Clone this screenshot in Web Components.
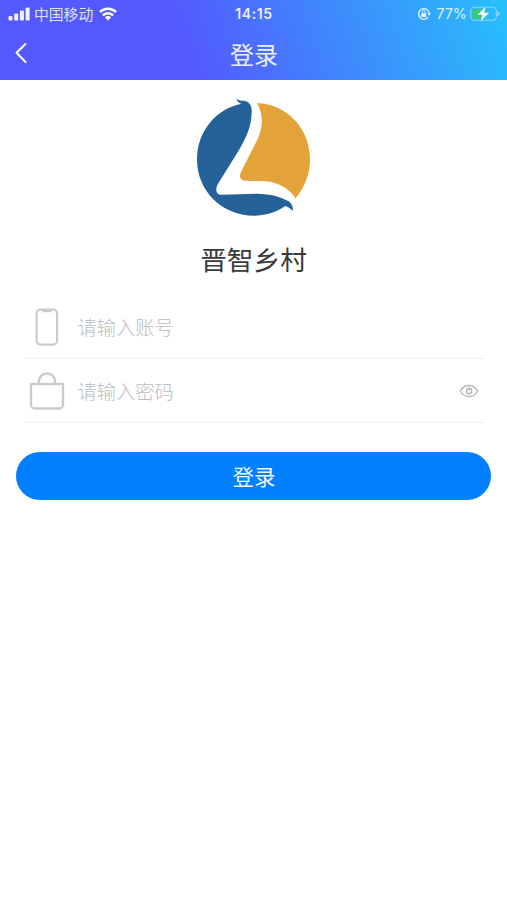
<!DOCTYPE html>
<html lang="zh-CN">
<head>
<meta charset="utf-8">
<title>登录</title>
<style>
html,body{margin:0;height:100%;background:#fff}
body{font-family:"Noto Sans CJK SC","Noto Sans",sans-serif}
</style>
</head>
<body>
<login-page></login-page>
<script>
function define(name, html) {
  const t = document.createElement('template');
  t.innerHTML = html;
  customElements.define(name, class extends HTMLElement {
    constructor() {
      super();
      this.attachShadow({mode: 'open'}).appendChild(t.content.cloneNode(true));
    }
  });
}

define('status-bar', `
<style>
:host{display:grid;grid-template-columns:1fr auto 1fr;align-items:center;height:27px;padding:0 7px 0 8px;color:#dfe2ff;font-size:14.8px;line-height:27px;box-sizing:border-box}
div{display:flex;align-items:center;height:27px}
.end{justify-content:flex-end}
svg{display:block;flex:none}
.carrier{margin:-1px 6px 0 4px}
.time{font:600 14px/27px Inter,sans-serif;letter-spacing:.6px;color:#e8efff}
.pct{font:400 14px/27px Inter,sans-serif;letter-spacing:.2px;margin:0 3px 0 6px;color:#dff2ff}
</style>
<div>
<svg width="22" height="14" viewBox="0 0 22 14" fill="#f2f4ff"><rect x=".5" y="9" width="4" height="4.5" rx="1"/><rect x="6.2" y="6.5" width="4" height="7" rx="1"/><rect x="11.9" y="3.5" width="4" height="10" rx="1"/><rect x="17.6" y=".5" width="4" height="13" rx="1"/></svg>
<span class="carrier">中国移动</span>
<svg width="18" height="14" viewBox="0 0 18 14" fill="none" stroke="#fff" stroke-width="2.5"><path d="M.9 5C5.5.5 12.5.5 17.1 5"/><path d="M3.8 8.3C6.8 5.4 11.2 5.4 14.2 8.3"/><path d="M9 13.4 5.9 10.3C7.7 8.7 10.3 8.7 12.1 10.3Z" fill="#fff" stroke="none"/></svg>
</div>
<span class="time">14:15</span>
<div class="end">
<svg width="14" height="14" viewBox="0 0 14 14" fill="none" stroke="#dff2ff" stroke-width="1.4"><path d="M11.2 10.2A5.3 5.3 0 1 1 12 5.4"/><path d="M10.1 5.8h3.9L12.2 8.8Z" fill="#dff2ff" stroke="none"/><rect x="4.2" y="6.2" width="5" height="3.8" rx=".6" fill="#dff2ff" stroke="none"/><path d="M5.2 6.5V5.3a1.5 1.5 0 0 1 3 0v1.2" stroke-width="1"/></svg>
<span class="pct">77%</span>
<svg width="30" height="16" viewBox="0 0 30 16"><rect x=".8" y="1.3" width="25.6" height="13" rx="3.6" fill="none" stroke="#8ed4ff" stroke-width="1.1"/><path d="M4.5 3H16.5L15 12.6H4.5A2 2 0 0 1 2.5 10.6V5A2 2 0 0 1 4.5 3Z" fill="#35ce68"/><path d="M27.5 5.2q2 .8 2 2.6t-2 2.6Z" fill="#8ed4ff"/><path d="M15.6 .6 7.4 8.9H12.2L10.4 15.4 19.4 6.8H14.4Z" fill="#fff" stroke="#36b5f4" stroke-width=".3"/></svg>
</div>`);

define('nav-bar', `
<style>
:host{display:grid;grid-template-columns:60px 1fr 60px;align-items:center;height:53px;color:#edf1ff}
svg{display:block;margin:-1px 0 0 13.5px}
h1{margin:-1px 0 0 1px;text-align:center;font-size:24px;font-weight:400;line-height:53px}
</style>
<svg width="14" height="22" viewBox="0 0 14 22" fill="none" stroke="#fff" stroke-width="2" stroke-linecap="round" stroke-linejoin="round"><path d="M11.5 2 2.5 10.8 11.5 20"/></svg>
<h1><slot></slot></h1>`);

define('app-header', `
<style>:host{display:block;height:80px;background:linear-gradient(70deg,#5458ff 36%,#27c0fb 100%)}</style>
<slot></slot>`);

define('app-brand', `
<style>
:host{display:flex;flex-direction:column;align-items:center;padding-top:10px;height:205px;box-sizing:border-box}
svg{display:block}
h2{margin:14px 0 0;font-size:26.7px;font-weight:400;line-height:40px;color:#3a3a3c}
</style>
<svg width="133" height="135" viewBox="0 0 399 405">
<path fill="#26629a" d="M148 26C155 31 163 32 172 32C187 35 195 46 194 66C194 110 177 145 151 188L94 280C83 299 87 314 105 314L210 311C250 311 285 322 305 334C314 340 318 350 318 363C310 355 302 350 295 348C267 368 234 377 201 377C105 377 30 302 30 209C30 123 88 56 163 41C155 38 151 34 148 26Z"/>
<path fill="#e4a23b" d="M210 39C301 43 369 116 369 208C369 252 353 293 326 325C306 295 274 277 235 274L174 272C159 270 155 259 163 244L210 151C227 118 232 76 210 39Z"/>
</svg>
<h2><slot></slot></h2>`);

define('form-field', `
<style>
:host{display:flex;align-items:center;height:64px;margin:0 22px 0 24px;padding:1px 6px 0 4px;border-bottom:1px solid #eee;box-sizing:border-box;color:#bcbdc3}
.icon{display:flex;width:37px;justify-content:center}
.text{flex:1;margin-left:12.5px;font-size:19.3px;line-height:30px;font-weight:300}
</style>
<span class="icon"><slot name="icon"></slot></span><span class="text"><slot></slot></span><slot name="action"></slot>`);

define('phone-icon', `
<style>:host,svg{display:block}</style>
<svg width="26" height="38" viewBox="0 0 26 38" fill="none" stroke="#cbcbcd" stroke-width="2.2"><rect x="2.6" y="1.6" width="20.5" height="35" rx="4"/><path d="M7.5 2h10.5l-1.2 2.3H8.7Z" fill="#cbcbcd" stroke="none"/></svg>`);

define('bag-icon', `
<style>:host,svg{display:block}</style>
<svg width="36" height="40" viewBox="0 0 36 40" fill="none" stroke="#cbcbcd" stroke-width="2.3" stroke-linejoin="round"><path d="M2 13H34V33.5A4 4 0 0 1 30 37.5H6A4 4 0 0 1 2 33.5Z"/><path d="M9.8 12.5V10.7A8.2 8.2 0 0 1 26.2 10.7V12.5"/></svg>`);

define('eye-icon', `
<style>:host,svg{display:block}</style>
<svg width="20" height="16" viewBox="0 0 20 16" fill="none" stroke="#b2b4b6" stroke-width="1.4"><path d="M1.2 8C5.8.6 14.2.6 18.8 8C14.2 15.4 5.8 15.4 1.2 8Z"/><circle cx="10" cy="8" r="2.7"/><path d="M10 7.8V5.6"/></svg>`);

define('primary-button', `
<style>
:host{display:block;margin:29px 16px 0}
button{display:block;width:100%;height:48px;padding:0 0 1px 1px;border:0;border-radius:24px;background:#0080ff;color:#eef6ff;font:400 21.5px/47px "Noto Sans CJK SC",sans-serif}
</style>
<button type="button"><slot></slot></button>`);

define('login-page', `
<style>:host{display:block;min-height:900px;background:#fff}.form{padding-top:10px}</style>
<app-header><status-bar></status-bar><nav-bar>登录</nav-bar></app-header>
<app-brand>晋智乡村</app-brand>
<div class="form">
<form-field><phone-icon slot="icon"></phone-icon>请输入账号</form-field>
<form-field><bag-icon slot="icon"></bag-icon>请输入密码<eye-icon slot="action"></eye-icon></form-field>
</div>
<primary-button>登录</primary-button>`);
</script>
</body>
</html>
